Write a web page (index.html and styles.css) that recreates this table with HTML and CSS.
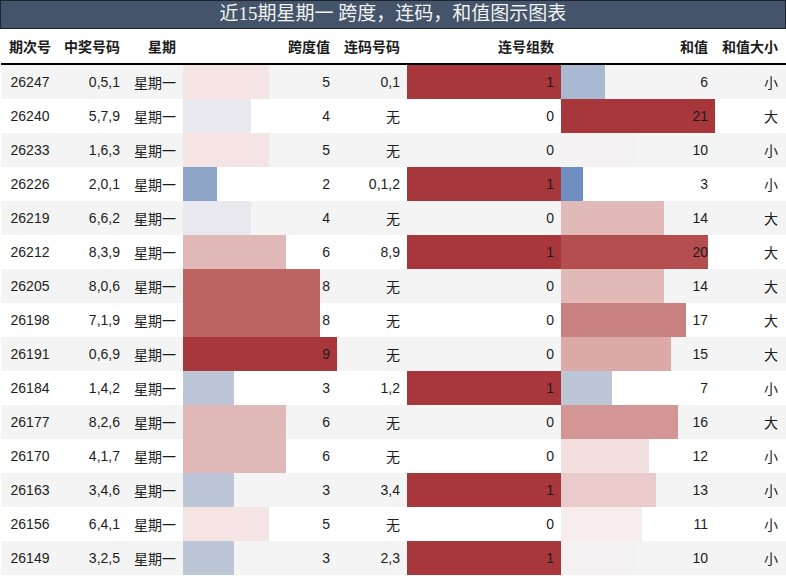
FILE: index.html
```html
<!DOCTYPE html>
<html lang="zh">
<head>
<meta charset="utf-8">
<link rel="stylesheet" href="styles.css">
</head>
<body>
<div class="title">近15期星期一 跨度，连码，和值图示图表</div>
<div class="table">
  <div class="row head">
    <div class="c c1">期次号</div>
    <div class="c c2">中奖号码</div>
    <div class="c c3">星期</div>
    <div class="c c4">跨度值</div>
    <div class="c c5">连码号码</div>
    <div class="c c6">连号组数</div>
    <div class="c c7">和值</div>
    <div class="c c8">和值大小</div>
  </div>

  <div class="row odd">
    <div class="c c1">26247</div><div class="c c2">0,5,1</div><div class="c c3">星期一</div>
    <div class="c c4"><span class="bar" style="width:86px;background:#f5e4e4"></span><span class="v">5</span></div>
    <div class="c c5">0,1</div>
    <div class="c c6"><span class="bar" style="width:154px;background:#a8373b"></span><span class="v">1</span></div>
    <div class="c c7"><span class="bar" style="width:44px;background:#a9b9d1"></span><span class="v">6</span></div>
    <div class="c c8">小</div>
  </div>
  <div class="row">
    <div class="c c1">26240</div><div class="c c2">5,7,9</div><div class="c c3">星期一</div>
    <div class="c c4"><span class="bar" style="width:68px;background:#e9e8ee"></span><span class="v">4</span></div>
    <div class="c c5">无</div>
    <div class="c c6"><span class="v">0</span></div>
    <div class="c c7"><span class="bar" style="width:154px;background:#a8373b"></span><span class="v">21</span></div>
    <div class="c c8">大</div>
  </div>
  <div class="row odd">
    <div class="c c1">26233</div><div class="c c2">1,6,3</div><div class="c c3">星期一</div>
    <div class="c c4"><span class="bar" style="width:86px;background:#f5e4e4"></span><span class="v">5</span></div>
    <div class="c c5">无</div>
    <div class="c c6"><span class="v">0</span></div>
    <div class="c c7"><span class="bar" style="width:73px;background:#f4f2f2"></span><span class="v">10</span></div>
    <div class="c c8">小</div>
  </div>
  <div class="row">
    <div class="c c1">26226</div><div class="c c2">2,0,1</div><div class="c c3">星期一</div>
    <div class="c c4"><span class="bar" style="width:34px;background:#8fa5c8"></span><span class="v">2</span></div>
    <div class="c c5">0,1,2</div>
    <div class="c c6"><span class="bar" style="width:154px;background:#a8373b"></span><span class="v">1</span></div>
    <div class="c c7"><span class="bar" style="width:22px;background:#6e8fbf"></span><span class="v">3</span></div>
    <div class="c c8">小</div>
  </div>
  <div class="row odd">
    <div class="c c1">26219</div><div class="c c2">6,6,2</div><div class="c c3">星期一</div>
    <div class="c c4"><span class="bar" style="width:68px;background:#e9e8ee"></span><span class="v">4</span></div>
    <div class="c c5">无</div>
    <div class="c c6"><span class="v">0</span></div>
    <div class="c c7"><span class="bar" style="width:103px;background:#e0b9b8"></span><span class="v">14</span></div>
    <div class="c c8">大</div>
  </div>
  <div class="row">
    <div class="c c1">26212</div><div class="c c2">8,3,9</div><div class="c c3">星期一</div>
    <div class="c c4"><span class="bar" style="width:103px;background:#e0b8b7"></span><span class="v">6</span></div>
    <div class="c c5">8,9</div>
    <div class="c c6"><span class="bar" style="width:154px;background:#a8373b"></span><span class="v">1</span></div>
    <div class="c c7"><span class="bar" style="width:147px;background:#b34d4e"></span><span class="v">20</span></div>
    <div class="c c8">大</div>
  </div>
  <div class="row odd">
    <div class="c c1">26205</div><div class="c c2">8,0,6</div><div class="c c3">星期一</div>
    <div class="c c4"><span class="bar" style="width:137px;background:#bd6562"></span><span class="v">8</span></div>
    <div class="c c5">无</div>
    <div class="c c6"><span class="v">0</span></div>
    <div class="c c7"><span class="bar" style="width:103px;background:#e0b9b8"></span><span class="v">14</span></div>
    <div class="c c8">大</div>
  </div>
  <div class="row">
    <div class="c c1">26198</div><div class="c c2">7,1,9</div><div class="c c3">星期一</div>
    <div class="c c4"><span class="bar" style="width:137px;background:#bd6562"></span><span class="v">8</span></div>
    <div class="c c5">无</div>
    <div class="c c6"><span class="v">0</span></div>
    <div class="c c7"><span class="bar" style="width:125px;background:#c98080"></span><span class="v">17</span></div>
    <div class="c c8">大</div>
  </div>
  <div class="row odd">
    <div class="c c1">26191</div><div class="c c2">0,6,9</div><div class="c c3">星期一</div>
    <div class="c c4"><span class="bar" style="width:154px;background:#a8373b"></span><span class="v">9</span></div>
    <div class="c c5">无</div>
    <div class="c c6"><span class="v">0</span></div>
    <div class="c c7"><span class="bar" style="width:110px;background:#dba9a8"></span><span class="v">15</span></div>
    <div class="c c8">大</div>
  </div>
  <div class="row">
    <div class="c c1">26184</div><div class="c c2">1,4,2</div><div class="c c3">星期一</div>
    <div class="c c4"><span class="bar" style="width:51px;background:#bdc6d6"></span><span class="v">3</span></div>
    <div class="c c5">1,2</div>
    <div class="c c6"><span class="bar" style="width:154px;background:#a8373b"></span><span class="v">1</span></div>
    <div class="c c7"><span class="bar" style="width:51px;background:#bdc6d6"></span><span class="v">7</span></div>
    <div class="c c8">小</div>
  </div>
  <div class="row odd">
    <div class="c c1">26177</div><div class="c c2">8,2,6</div><div class="c c3">星期一</div>
    <div class="c c4"><span class="bar" style="width:103px;background:#e0b8b7"></span><span class="v">6</span></div>
    <div class="c c5">无</div>
    <div class="c c6"><span class="v">0</span></div>
    <div class="c c7"><span class="bar" style="width:117px;background:#d39695"></span><span class="v">16</span></div>
    <div class="c c8">大</div>
  </div>
  <div class="row">
    <div class="c c1">26170</div><div class="c c2">4,1,7</div><div class="c c3">星期一</div>
    <div class="c c4"><span class="bar" style="width:103px;background:#e0b8b7"></span><span class="v">6</span></div>
    <div class="c c5">无</div>
    <div class="c c6"><span class="v">0</span></div>
    <div class="c c7"><span class="bar" style="width:88px;background:#f3dfdf"></span><span class="v">12</span></div>
    <div class="c c8">小</div>
  </div>
  <div class="row odd">
    <div class="c c1">26163</div><div class="c c2">3,4,6</div><div class="c c3">星期一</div>
    <div class="c c4"><span class="bar" style="width:51px;background:#bdc6d6"></span><span class="v">3</span></div>
    <div class="c c5">3,4</div>
    <div class="c c6"><span class="bar" style="width:154px;background:#a8373b"></span><span class="v">1</span></div>
    <div class="c c7"><span class="bar" style="width:95px;background:#e8cbca"></span><span class="v">13</span></div>
    <div class="c c8">小</div>
  </div>
  <div class="row">
    <div class="c c1">26156</div><div class="c c2">6,4,1</div><div class="c c3">星期一</div>
    <div class="c c4"><span class="bar" style="width:86px;background:#f5e4e4"></span><span class="v">5</span></div>
    <div class="c c5">无</div>
    <div class="c c6"><span class="v">0</span></div>
    <div class="c c7"><span class="bar" style="width:81px;background:#f8eded"></span><span class="v">11</span></div>
    <div class="c c8">小</div>
  </div>
  <div class="row odd">
    <div class="c c1">26149</div><div class="c c2">3,2,5</div><div class="c c3">星期一</div>
    <div class="c c4"><span class="bar" style="width:51px;background:#bdc6d6"></span><span class="v">3</span></div>
    <div class="c c5">2,3</div>
    <div class="c c6"><span class="bar" style="width:154px;background:#a8373b"></span><span class="v">1</span></div>
    <div class="c c7"><span class="bar" style="width:73px;background:#f4f2f2"></span><span class="v">10</span></div>
    <div class="c c8">小</div>
  </div>
</div>
</body>
</html>
```

FILE: styles.css
```css
html, body {
  margin: 0;
  padding: 0;
  background: #ffffff;
}
body {
  width: 786px;
  height: 576px;
  overflow: hidden;
  font-family: "Liberation Sans", "Noto Sans CJK SC", sans-serif;
  font-size: 14px;
  color: #1c1c1c;
}
.title {
  box-sizing: border-box;
  height: 29px;
  background: #44546a;
  border: 1px solid #1e252e;
  color: #f2f2f2;
  font-family: "Liberation Serif", "Noto Sans CJK SC", serif;
  font-size: 19px;
  line-height: 26px;
  text-align: center;
}
.table {
  display: flex;
  flex-direction: column;
  padding-left: 1px;
}
.row {
  display: flex;
  height: 34px;
}
.row.odd {
  background: #f4f4f4;
}
.row.head {
  font-weight: bold;
  background: #ffffff;
  border-bottom: 2px solid #000000;
}
.c {
  box-sizing: border-box;
  display: flex;
  align-items: center;
  justify-content: flex-end;
  padding-right: 7px;
  position: relative;
  white-space: nowrap;
}
.c1 { width: 58px; justify-content: center; padding-right: 0; }
.c2 { width: 68px; }
.c3 { width: 56px; }
.c4 { width: 154px; }
.c5 { width: 70px; }
.c6 { width: 154px; }
.c7 { width: 154px; }
.c8 { width: 70px; }
.bar {
  position: absolute;
  left: 0;
  top: 0;
  bottom: 0;
}
.v {
  position: relative;
}
```
